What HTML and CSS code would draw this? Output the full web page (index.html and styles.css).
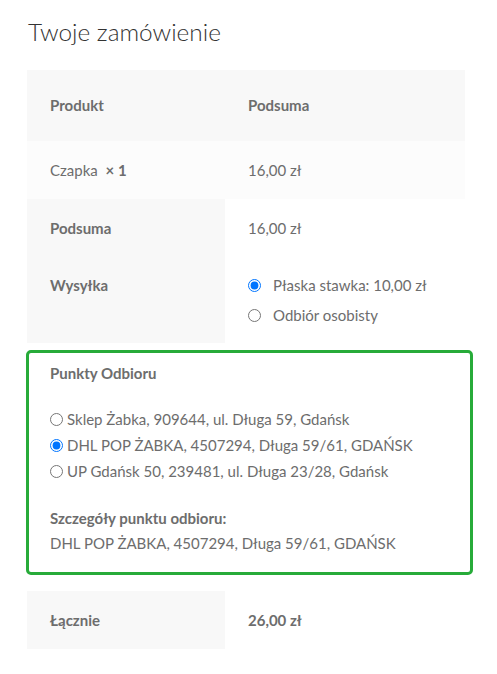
FILE: index.html
```html
<!DOCTYPE html>
<html lang="pl">
<head>
<meta charset="utf-8">
<title>Twoje zamówienie</title>
<link rel="stylesheet" href="styles.css">
</head>
<body>
<div class="order">
  <h3 class="title">Twoje zamówienie</h3>
  <div class="table">
    <div class="row head">
      <div class="cell">Produkt</div>
      <div class="cell">Podsuma</div>
    </div>
    <div class="row item">
      <div class="cell">Czapka <strong class="qty">× 1</strong></div>
      <div class="cell">16,00 zł</div>
    </div>
    <div class="row sub">
      <div class="cell label">Podsuma</div>
      <div class="cell">16,00 zł</div>
    </div>
    <div class="row ship">
      <div class="cell label">Wysyłka</div>
      <div class="cell">
        <label class="opt"><input type="radio" name="ship" checked><span>Płaska stawka: 10,00 zł</span></label>
        <label class="opt"><input type="radio" name="ship"><span>Odbiór osobisty</span></label>
      </div>
    </div>
  </div>
  <div class="points">
    <div class="points-title">Punkty Odbioru</div>
    <div class="points-list">
      <label class="point"><input type="radio" name="pt"><span>Sklep Żabka, 909644, ul. Długa 59, Gdańsk</span></label>
      <label class="point"><input type="radio" name="pt" checked><span>DHL POP ŻABKA, 4507294, Długa 59/61, GDAŃSK</span></label>
      <label class="point"><input type="radio" name="pt"><span>UP Gdańsk 50, 239481, ul. Długa 23/28, Gdańsk</span></label>
    </div>
    <div class="details-title">Szczegóły punktu odbioru:</div>
    <div class="details">DHL POP ŻABKA, 4507294, Długa 59/61, GDAŃSK</div>
  </div>
  <div class="table">
    <div class="row total">
      <div class="cell label">Łącznie</div>
      <div class="cell">26,00 zł</div>
    </div>
  </div>
</div>
</body>
</html>
```
FILE: styles.css
```css
html, body {
  margin: 0;
  padding: 0;
  background: #ffffff;
}
body {
  font-family: Lato, "Liberation Sans", sans-serif;
  font-size: 15px;
  color: #6d6d6d;
}
.order {
  padding: 0 24px 0 26px;
}
.title {
  margin: 0;
  padding: 15px 0 0 2px;
  font-size: 24.4px;
  font-weight: 300;
  line-height: 34px;
  color: #333333;
}
.table {
  margin-left: 1px;
  width: 438px;
}
.head {
  margin-top: 21px;
}
.row {
  display: grid;
  grid-template-columns: 198px 240px;
}
.cell {
  padding: 0 23px;
}
.head .cell {
  background: #f8f8f8;
  font-weight: 700;
  padding-top: 25px;
  padding-bottom: 26px;
  line-height: 20px;
}
.item .cell {
  background: #fcfcfc;
  padding-top: 19px;
  padding-bottom: 19px;
  line-height: 20px;
}
.qty {
  margin-left: 4px;
}
.label {
  background: #f8f8f8;
  font-weight: 700;
}
.sub .cell {
  padding-top: 19px;
  padding-bottom: 19px;
  line-height: 20px;
}
.ship .cell {
  padding-top: 18px;
  padding-bottom: 13px;
  line-height: 20px;
}
.opt {
  display: flex;
  align-items: center;
  height: 30px;
  margin-top: -5px;
}
.opt + .opt {
  margin-top: 0;
}
.opt input {
  margin: 0 12px 0 0;
  width: 13px;
  height: 13px;
}
.points {
  margin-top: 7px;
  border: 3px solid #27ab39;
  border-radius: 5px;
  padding: 10px 21px 19px 21px;
  line-height: 20px;
}
.points-title {
  font-weight: 700;
}
.points-list {
  margin-top: 23px;
}
.point {
  display: flex;
  align-items: center;
  height: 26px;
}
.point input {
  margin: 0 4px 0 0;
  width: 13px;
  height: 13px;
}
.details-title {
  margin-top: 24px;
  font-weight: 700;
}
.details {
  margin-top: 5px;
}
.total {
  margin-top: 16px;
}
.total .cell {
  padding-top: 19px;
  padding-bottom: 19px;
  line-height: 20px;
}
.total .cell + .cell {
  font-weight: 700;
}
```
